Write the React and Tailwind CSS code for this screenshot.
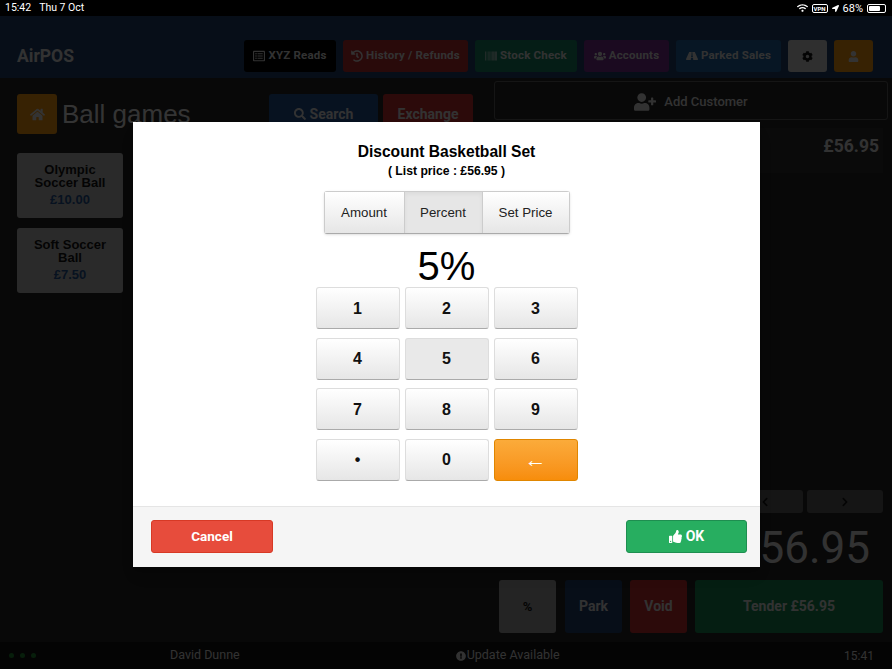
import { FaHome, FaCog, FaUser, FaThumbsUp, FaSearch, FaHistory, FaBarcode, FaUsers, FaRoad, FaRegListAlt, FaUserPlus, FaExclamationCircle, FaChevronLeft, FaChevronRight, FaWifi, FaLocationArrow } from "react-icons/fa";

const navButtons = [
  { label: "XYZ Reads", icon: <FaRegListAlt />, cls: "w-[92px] bg-black" },
  { label: "History / Refunds", icon: <FaHistory />, cls: "w-[125px] bg-[#a5282a]" },
  { label: "Stock Check", icon: <FaBarcode />, cls: "w-[102px] bg-[#14765a]" },
  { label: "Accounts", icon: <FaUsers />, cls: "w-[85px] bg-[#6c2a80]" },
  { label: "Parked Sales", icon: <FaRoad />, cls: "w-[105px] bg-[#1c5a8e]" },
];

const products = [
  { name: "Olympic Soccer Ball", price: "£10.00" },
  { name: "Soft Soccer Ball", price: "£7.50" },
];

const keys = ["1", "2", "3", "4", "5", "6", "7", "8", "9", "•", "0"];

export default function App() {
  return (
    <div className="relative flex h-[669px] w-[892px] flex-col overflow-hidden bg-black font-['Roboto',sans-serif]">
      {/* iPad status bar */}
      <div className="flex h-4 items-center justify-between px-[5px] text-[10.5px] leading-none text-white">
        <div className="flex gap-[8px]">
          <span>15:42</span>
          <span>Thu 7 Oct</span>
        </div>
        <div className="flex items-center gap-[4px] pr-[1px]">
          <FaWifi className="h-[10px] w-[11px]" />
          <span className="rounded-[2px] border border-white px-[1px] text-[6px] font-bold leading-[7px]">VPN</span>
          <FaLocationArrow className="h-[7px] w-[7px]" />
          <span className="text-[11px]">68%</span>
          <div className="h-[9px] w-[19px] rounded-[2px] border border-white p-[1px]">
            <div className="h-full w-[11px] rounded-[1px] bg-white" />
          </div>
        </div>
      </div>

      {/* Header */}
      <header className="flex h-[62px] items-end bg-[#1e3a5f] pb-[6px] pl-[17px] pr-[19px]">
        <span className="text-[17.5px] font-bold leading-[32px] text-[#c8c8c8]">AirPOS</span>
        <div className="ml-auto flex gap-[7px]">
          {navButtons.map((b) => (
            <div key={b.label} className={`flex h-[32px] items-center justify-center gap-[3px] rounded-[3px] text-[11.5px] font-bold tracking-[0.2px] text-[#c8c8c8] ${b.cls}`}>
              <span className="text-[12px]">{b.icon}</span>
              {b.label}
            </div>
          ))}
          <div className="flex h-[32px] w-[39px] items-center justify-center rounded-[3px] bg-[#bbb] text-[11px] text-[#111]">
            <FaCog />
          </div>
          <div className="flex h-[32px] w-[39px] items-center justify-center rounded-[3px] bg-[#d9860f] text-[11px] text-[#ccc]">
            <FaUser />
          </div>
        </div>
      </header>

      {/* Main */}
      <div className="flex flex-1 bg-[#222]">
        <div className="w-[494px] pl-[17px] pt-4">
          <div className="flex h-10 items-center">
            <div className="flex h-10 w-10 items-center justify-center rounded-[3px] bg-[#d9860f] text-[15px] text-[#ccc]">
              <FaHome />
            </div>
            <span className="ml-[5px] w-[207px] font-['Liberation_Sans',sans-serif] text-[26px] text-[#d0d0d0]">Ball games</span>
            <div className="flex h-10 w-[109px] items-center justify-center gap-1 rounded-[3px] bg-[#1e4a80] text-[14px] font-bold text-[#c8c8c8]">
              <FaSearch className="text-[12px]" />
              Search
            </div>
            <div className="ml-[5px] flex h-10 w-[90px] items-center justify-center rounded-[3px] bg-[#b02a2a] text-[14px] font-bold text-[#c8c8c8]">
              Exchange
            </div>
          </div>
          <div className="mt-[19px] flex flex-col gap-[10px]">
            {products.map((p) => (
              <div key={p.name} className="flex h-[65px] w-[106px] flex-col items-center justify-center rounded-[3px] bg-[#a8a8a8] px-2 pb-[2px] text-center font-['Liberation_Sans',sans-serif] text-[13px] font-bold leading-[13px] text-[#111]">
                {p.name}
                <span className="mt-[4px] text-[#1e4a80]">{p.price}</span>
              </div>
            ))}
          </div>
        </div>

        <div className="flex flex-1 flex-col pr-[9px]">
          <div className="-mr-[5px] mt-[3px] flex h-[39px] items-center justify-center gap-2 rounded-[3px] border border-[#555] pt-[2px] text-[13px] font-medium text-[#c8c8c8]">
            <FaUserPlus className="text-[22px]" />
            Add Customer
          </div>
          <div className="mt-[8px] flex h-[45px] justify-end bg-[#2a2a2a] pr-[4px] pt-[5px] text-[17.5px] font-bold text-[#c8c8c8]">
            £56.95
          </div>
          <div className="mt-auto flex justify-end gap-1">
            <div className="flex h-[23px] w-[76px] items-center justify-center rounded-[3px] bg-[#555] text-[10px] text-[#111]">
              <FaChevronLeft />
            </div>
            <div className="flex h-[23px] w-[76px] items-center justify-center rounded-[3px] bg-[#555] text-[10px] text-[#111]">
              <FaChevronRight />
            </div>
          </div>
          <div className="mt-[8px] h-[59px] pr-[13px] text-right text-[44px] leading-[54px] text-[#c8c8c8]">£56.95</div>
          <div className="mb-[9px] ml-[5px] flex h-[53px] gap-2">
            <div className="mr-px flex w-[57px] items-center justify-center rounded-[3px] bg-[#909090] text-[13px] font-bold text-[#111]">%</div>
            <div className="flex w-[57px] items-center justify-center rounded-[3px] bg-[#1e3a5f] text-[14px] font-bold text-[#c8c8c8]">Park</div>
            <div className="flex w-[57px] items-center justify-center rounded-[3px] bg-[#b02a2a] text-[14px] font-bold text-[#c8c8c8]">Void</div>
            <div className="flex flex-1 items-center justify-center rounded-[3px] bg-[#14794a] text-[14px] font-bold text-[#c8c8c8]">Tender £56.95</div>
          </div>
        </div>
      </div>

      {/* Footer */}
      <footer className="flex h-[27px] items-center bg-[#111] text-[12.5px] text-[#c8c8c8]">
        <div className="ml-[9px] flex gap-[6px]">
          <span className="h-[5px] w-[5px] rounded-full bg-[#1f7a2e]" />
          <span className="h-[5px] w-[5px] rounded-full bg-[#1f7a2e]" />
          <span className="h-[5px] w-[5px] rounded-full bg-[#1f7a2e]" />
        </div>
        <span className="ml-[134px]">David Dunne</span>
        <span className="ml-[216px] flex items-center gap-[1px]">
          <FaExclamationCircle className="text-[10px]" />
          Update Available
        </span>
        <span className="ml-auto mr-[18px] text-[12px]">15:41</span>
      </footer>

      {/* Dim backdrop + discount dialog */}
      <div className="absolute inset-x-0 bottom-0 top-4 bg-black/75">
        <div className="absolute left-[133px] top-[106px] flex w-[627px] flex-col bg-white font-['Liberation_Sans',sans-serif] shadow-lg">
          <div className="flex h-[384px] flex-col items-center pt-[21px]">
            <h2 className="text-[15.6px] font-bold leading-[18px] text-black">Discount Basketball Set</h2>
            <p className="mt-[3px] text-[12.2px] font-bold leading-[14px] text-black">( List price : £56.95 )</p>

            <div className="mt-[13px] flex h-[43px] w-[246px] rounded-[3px] border border-[#ccc] border-b-[#aaa] text-[13.3px] text-[#222] shadow-sm">
              <div className="flex w-[79px] items-center justify-center bg-gradient-to-b from-white to-[#e6e6e6]">Amount</div>
              <div className="flex w-[79px] items-center justify-center border-x border-[#ccc] bg-[#e6e6e6] shadow-inner">Percent</div>
              <div className="flex flex-1 items-center justify-center bg-gradient-to-b from-white to-[#e6e6e6]">Set Price</div>
            </div>

            <div className="mt-[8px] h-[45px] text-[40px] leading-[48px] text-black">5%</div>

            <div className="grid grid-cols-[84px_84px_84px] gap-x-[5px] gap-y-[8.5px]">
              {keys.map((k) => (
                <div key={k} className={`flex h-[42px] items-center justify-center rounded-[3px] border border-[#ddd] border-b-[#aaa] pt-[1px] text-[16px] font-bold text-[#111] ${k === "5" ? "bg-[#e9e9e9]" : "bg-gradient-to-b from-white to-[#e6e6e6]"}`}>
                  {k}
                </div>
              ))}
              <div className="flex h-[42px] items-center justify-center rounded-[3px] border border-[#e08600] bg-gradient-to-b from-[#fbab3a] to-[#f78d0a] text-[22px] text-white">
                ←
              </div>
            </div>
          </div>

          <div className="flex h-[61px] items-start justify-between border-t border-[#e5e5e5] bg-[#f5f5f5] pl-[18px] pr-[13px] pt-[13px] font-['Roboto',sans-serif]">
            <div className="flex h-[33px] w-[122px] items-center justify-center rounded-[3px] border border-[#d73925] bg-[#e74c3c] text-[13.5px] font-bold text-white">
              Cancel
            </div>
            <div className="flex h-[33px] w-[121px] items-center justify-center gap-1 rounded-[3px] border border-[#1e8e50] bg-[#27ae60] text-[14px] font-bold text-white">
              <FaThumbsUp className="text-[13px]" />
              OK
            </div>
          </div>
        </div>
      </div>
    </div>
  );
}
